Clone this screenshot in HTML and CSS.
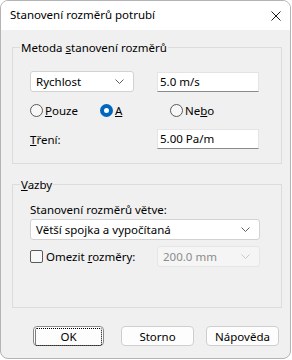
FILE: index.html
```html
<!DOCTYPE html>
<html>
    <head>
        <meta charset="UTF-8">
        <title>Stanovení rozměrů potrubí</title>
        <link rel="stylesheet" href="styles.css">
    </head>
    <body>
        <div class="window">
            <div class="titlebar">
                <span class="title">Stanovení rozměrů potrubí</span>
                <svg class="close" width="10" height="10" viewBox="0 0 10 10">
                    <path d="M0.5 0.5 L9.5 9.5 M9.5 0.5 L0.5 9.5" stroke="#1a1a1a" stroke-width="1" fill="none"/>
                </svg>
            </div>

            <div class="client">
                <fieldset class="group method">
                    <legend>Metoda <u>s</u>tanovení rozměrů</legend>
                    <div class="row pair first">
                        <div class="combo">
                            <span>Rychlost</span>
                            <svg class="chev" width="9" height="5" viewBox="0 0 9 5"><path d="M0.5 0.5 L4.5 4.5 L8.5 0.5" stroke="#606060" fill="none"/></svg>
                        </div>
                        <div class="edit">5.0 m/s</div>
                    </div>
                    <div class="row radios">
                        <label class="radio"><span class="mark"></span><span><u>P</u>ouze</span></label>
                        <label class="radio"><span class="mark on"></span><span><u>A</u></span></label>
                        <label class="radio"><span class="mark"></span><span>Ne<u>b</u>o</span></label>
                    </div>
                    <div class="row pair last">
                        <span class="text"><u>T</u>ření:</span>
                        <div class="edit">5.00 Pa/m</div>
                    </div>
                </fieldset>

                <fieldset class="group links">
                    <legend><u>V</u>azby</legend>
                    <div class="text caption">Stanovení rozměrů větve:</div>
                    <div class="combo wide">
                        <span>Větší spojka a vypočítaná</span>
                        <svg class="chev" width="9" height="5" viewBox="0 0 9 5"><path d="M0.5 0.5 L4.5 4.5 L8.5 0.5" stroke="#606060" fill="none"/></svg>
                    </div>
                    <div class="row pair limit">
                        <label class="check"><span class="box"></span><span>Omezit <u>r</u>ozměry:</span></label>
                        <div class="combo disabled">
                            <span>200.0 mm</span>
                            <svg class="chev" width="9" height="5" viewBox="0 0 9 5"><path d="M0.5 0.5 L4.5 4.5 L8.5 0.5" stroke="#c8c8c8" fill="none"/></svg>
                        </div>
                    </div>
                </fieldset>

                <div class="buttons">
                    <button class="btn ok"><span>OK</span></button>
                    <button class="btn storno">Storno</button>
                    <button class="btn help">Nápověda</button>
                </div>
            </div>
        </div>
    </body>
</html>
```

FILE: styles.css
```css
html, body {
    margin: 0;
    padding: 0;
    background: #ffffff;
}
body {
    font-family: 'Noto Sans', sans-serif;
    font-size: 11.5px;
    color: #000;
}
.window {
    width: 289px;
    height: 357px;
    border: 1px solid #b4b4b4;
    border-radius: 8px;
    overflow: hidden;
    background: #f0f0f0;
    display: flex;
    flex-direction: column;
}
.titlebar {
    height: 29px;
    flex-shrink: 0;
    background: #ffffff;
    display: flex;
    align-items: center;
    justify-content: space-between;
    padding: 0 9px 0 9px;
}
.title {
    margin-top: -2px;
}
.client {
    padding: 10px 10px 0 11px;
}
.group {
    margin: 0;
    padding: 0 0 0 17px;
    border: 1px solid #dcdcdc;
    width: 251px;
}
.group legend {
    margin-left: -10px;
    padding: 0 1px;
    line-height: 15px;
}
.row {
    display: grid;
    align-items: center;
}
.pair {
    grid-template-columns: 104px 102px;
    column-gap: 23px;
}
.method .first {
    margin-top: 16px;
    height: 21px;
}
.radios {
    grid-template-columns: 70px 70px auto;
    margin-top: 10px;
    height: 16px;
}
.method .last {
    margin-top: 10px;
    height: 22px;
    margin-bottom: 13px;
}
.combo {
    height: 19px;
    border: 1px solid #d2d2d2;
    border-radius: 3px;
    background: #ffffff;
    display: flex;
    align-items: center;
    justify-content: space-between;
    padding: 0 9px 0 5px;
}
.edit {
    height: 20px;
    box-sizing: border-box;
    background: #ffffff;
    border: 1px solid #e4e4e4;
    border-bottom: 1px solid #8a8a8a;
    padding: 1px 0 0 2px;
    line-height: 16px;
}
.radio, .check {
    display: flex;
    align-items: center;
    gap: 2px;
    white-space: nowrap;
}
.mark {
    flex-shrink: 0;
    width: 11px;
    height: 11px;
    border: 1px solid #5a5a5a;
    border-radius: 50%;
    background: #f7f7f7;
}
.mark.on {
    width: 5px;
    height: 5px;
    border: 4px solid #0067c0;
    background: #ffffff;
}
.links {
    margin-top: 13px;
}
.links .caption {
    margin-top: 10px;
    line-height: 15px;
}
.combo.wide {
    width: 214px;
    margin-top: 2px;
}
.limit {
    margin-top: 6px;
    height: 21px;
    margin-bottom: 40px;
}
.box {
    flex-shrink: 0;
    width: 11px;
    height: 11px;
    border: 1px solid #5a5a5a;
    border-radius: 2px;
    background: #f7f7f7;
    margin-right: 1px;
}
.combo.disabled {
    width: 87px;
    background: #f5f5f5;
    border-color: #e6e6e6;
    color: #8c8c8c;
}
.buttons {
    display: flex;
    margin-top: 18px;
    padding-left: 21px;
}
.btn {
    height: 20px;
    width: 72px;
    border: 1px solid #cfcfcf;
    border-radius: 4px;
    background: #fdfdfd;
    font-family: 'Noto Sans', sans-serif;
    font-size: 11.5px;
    color: #000;
    padding: 0;
}
.btn.ok {
    width: 71px;
    border-color: #8a8a8a;
    padding: 1px;
}
.btn.ok span {
    display: block;
    height: 16px;
    line-height: 16px;
    border: 1px dotted #000;
    border-radius: 2px;
}
.btn.storno {
    margin-left: 17px;
    width: 73px;
}
.btn.help {
    margin-left: 12px;
    width: 73px;
}
```
